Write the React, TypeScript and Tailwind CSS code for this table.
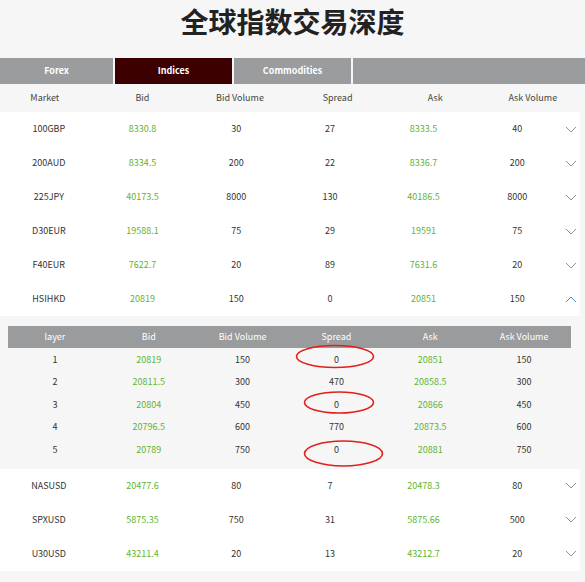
const MAIN_COLS = ['Market', 'Bid', 'Bid Volume', 'Spread', 'Ask', 'Ask Volume']
const LAYER_COLS = ['layer', 'Bid', 'Bid Volume', 'Spread', 'Ask', 'Ask Volume']

type Row = [string, string, string, string, string, string]

const TOP_ROWS: Row[] = [
  ['100GBP', '8330.8', '30', '27', '8333.5', '40'],
  ['200AUD', '8334.5', '200', '22', '8336.7', '200'],
  ['225JPY', '40173.5', '8000', '130', '40186.5', '8000'],
  ['D30EUR', '19588.1', '75', '29', '19591', '75'],
  ['F40EUR', '7622.7', '20', '89', '7631.6', '20'],
]

const OPEN_ROW: Row = ['HSIHKD', '20819', '150', '0', '20851', '150']

const LAYERS: Row[] = [
  ['1', '20819', '150', '0', '20851', '150'],
  ['2', '20811.5', '300', '470', '20858.5', '300'],
  ['3', '20804', '450', '0', '20866', '450'],
  ['4', '20796.5', '600', '770', '20873.5', '600'],
  ['5', '20789', '750', '0', '20881', '750'],
]

const BOTTOM_ROWS: Row[] = [
  ['NASUSD', '20477.6', '80', '7', '20478.3', '80'],
  ['SPXUSD', '5875.35', '750', '31', '5875.66', '500'],
  ['U30USD', '43211.4', '20', '13', '43212.7', '20'],
]

function Chevron({ up }: { up?: boolean }) {
  return (
    <svg width="12" height="7" viewBox="0 0 12 7" fill="none">
      <path
        d={up ? 'M1 6 L6 1 L11 6' : 'M1 1 L6 6 L11 1'}
        stroke={up ? '#4b90e2' : '#909090'}
        strokeWidth="1"
      />
    </svg>
  )
}

function MarketRow({ row, open }: { row: Row; open?: boolean }) {
  return (
    <div className="grid grid-cols-[repeat(6,93.7px)_1fr] h-[34px] items-center pl-[2px] text-[9px]">
      {row.map((v, i) => (
        <div key={i} className={`text-center ${i === 1 || i === 4 ? 'text-[#5fb432]' : 'text-[#333]'}`}>{v}</div>
      ))}
      <div className="flex justify-end pr-[3px]">
        <Chevron up={open} />
      </div>
    </div>
  )
}

export default function App() {
  return (
    <div className="relative w-[585px] h-[582px] overflow-hidden bg-[#f6f6f6] font-['Noto_Sans_CJK_SC','Noto_Sans',sans-serif]">
      {/* Title */}
      <h1 className="pt-[4px] h-[58px] text-center text-[28px] leading-[34px] font-bold text-[#222]">
        全球指数交易深度
      </h1>

      {/* Tabs */}
      <div className="flex h-[26px] gap-[2px] text-[9px] font-semibold text-white">
        <div className="w-[113px] bg-[#9b9c9e] flex items-center justify-center">Forex</div>
        <div className="w-[117px] bg-[#3d0000] flex items-center justify-center">Indices</div>
        <div className="w-[117px] bg-[#9b9c9e] flex items-center justify-center">Commodities</div>
        <div className="flex-1 bg-[#9b9c9e]" />
      </div>

      {/* Header */}
      <div className="grid grid-cols-[repeat(6,97.6px)] h-[28px] items-center ml-[-4px] text-[9px] text-[#444]">
        {MAIN_COLS.map(c => (
          <div key={c} className="text-center">{c}</div>
        ))}
      </div>

      {/* Rows */}
      <div className="w-[580px] bg-white rounded-r-[3px]">
        {TOP_ROWS.map(r => <MarketRow key={r[0]} row={r} />)}
        <MarketRow row={OPEN_ROW} open />
      </div>

      {/* Depth layers */}
      <div className="pt-[10px] pb-[8px] pl-[8px] w-[571px]">
        <div className="grid grid-cols-[repeat(6,1fr)] h-[22px] items-center bg-[#9a9b9d] text-[9px] text-white">
          {LAYER_COLS.map(c => (
            <div key={c} className="text-center">{c}</div>
          ))}
        </div>
        {LAYERS.map(r => (
          <div key={r[0]} className="grid grid-cols-[repeat(6,1fr)] h-[22.5px] items-center text-[9px]">
            {r.map((v, i) => (
              <div key={i} className={`text-center ${i === 1 || i === 4 ? 'text-[#5fb432]' : 'text-[#333]'}`}>{v}</div>
            ))}
          </div>
        ))}
      </div>

      <div className="w-[580px] bg-white rounded-r-[3px]">
        {BOTTOM_ROWS.map(r => <MarketRow key={r[0]} row={r} />)}
      </div>

      {/* red annotation rings */}
      <svg className="absolute left-0 top-0 pointer-events-none" width="585" height="582">
        <ellipse cx="335" cy="356.5" rx="38.5" ry="11" fill="none" stroke="#e0201c" strokeWidth="1.6" />
        <ellipse cx="339" cy="402.5" rx="34.5" ry="10.5" fill="none" stroke="#e0201c" strokeWidth="1.6" />
        <ellipse cx="343.5" cy="453.5" rx="39" ry="12.5" fill="none" stroke="#e0201c" strokeWidth="1.6" />
      </svg>
    </div>
  )
}
